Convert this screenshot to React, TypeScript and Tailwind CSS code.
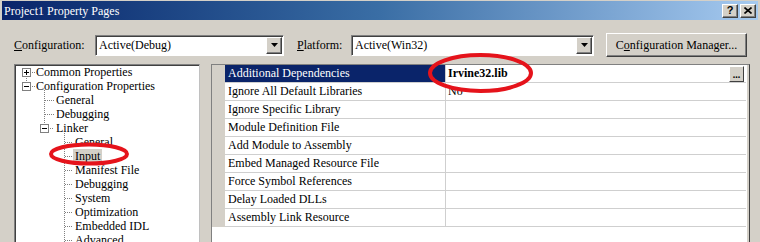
import React from "react";

const font = { fontFamily: '"Liberation Serif", "Times New Roman", serif' };

function Combo({ width, text }: { width: string; text: string }) {
  return (
    <div
      className={`${width} h-[21px] bg-white border border-t-[#808080] border-l-[#808080] border-b-white border-r-white shadow-[inset_1px_1px_0_#404040] flex items-center justify-between`}
    >
      <span className="pl-[3px] text-[12px] leading-none text-black">{text}</span>
      <div className="w-[16px] h-[17px] mr-[1px] bg-[#d4d0c8] border border-t-[#ffffff] border-l-[#ffffff] border-b-[#404040] border-r-[#404040] shadow-[inset_-1px_-1px_0_#808080] flex items-center justify-center">
        <svg width="7" height="4" viewBox="0 0 7 4">
          <path d="M0 0 H7 L3.5 4 Z" fill="#000" />
        </svg>
      </div>
    </div>
  );
}

const treeRows: { text: string; x: number; selected?: boolean }[] = [
  { text: "Common Properties", x: 36 },
  { text: "Configuration Properties", x: 36 },
  { text: "General", x: 56 },
  { text: "Debugging", x: 56 },
  { text: "Linker", x: 56 },
  { text: "General", x: 75 },
  { text: "Input", x: 75, selected: true },
  { text: "Manifest File", x: 75 },
  { text: "Debugging", x: 75 },
  { text: "System", x: 75 },
  { text: "Optimization", x: 75 },
  { text: "Embedded IDL", x: 75 },
  { text: "Advanced", x: 75 },
];

const gridRows: { name: string; value?: string; bold?: boolean; selected?: boolean }[] = [
  { name: "Additional Dependencies", value: "Irvine32.lib", bold: true, selected: true },
  { name: "Ignore All Default Libraries", value: "No" },
  { name: "Ignore Specific Library" },
  { name: "Module Definition File" },
  { name: "Add Module to Assembly" },
  { name: "Embed Managed Resource File" },
  { name: "Force Symbol References" },
  { name: "Delay Loaded DLLs" },
  { name: "Assembly Link Resource" },
];

function TreeLines() {
  const ox = 15;
  const cy = (i: number) => 7 + 14 * i;
  const dot = "#808080";
  const hLine = (x1: number, x2: number, y: number, k: string) => (
    <line key={k} x1={x1 - ox} x2={x2 - ox} y1={y + 0.5} y2={y + 0.5} stroke={dot} strokeDasharray="1 1" />
  );
  const vLine = (x: number, y1: number, y2: number, k: string) => (
    <line key={k} x1={x - ox + 0.5} x2={x - ox + 0.5} y1={y1} y2={y2} stroke={dot} strokeDasharray="1 1" />
  );
  const box = (x: number, y: number, plus: boolean, k: string) => (
    <g key={k}>
      <rect x={x - ox + 0.5} y={y - 4 + 0.5} width={8} height={8} fill="#fff" stroke="#808080" />
      <line x1={x - ox + 2} x2={x - ox + 7} y1={y + 0.5} y2={y + 0.5} stroke="#000" />
      {plus && <line x1={x - ox + 4.5} x2={x - ox + 4.5} y1={y - 2} y2={y + 3} stroke="#000" />}
    </g>
  );
  const els: React.ReactNode[] = [];
  els.push(vLine(26, cy(0), cy(1), "v1"));
  els.push(hLine(30, 35, cy(0), "h0"));
  els.push(hLine(30, 35, cy(1), "h1"));
  els.push(vLine(44, cy(1) + 4, cy(4), "v2"));
  els.push(hLine(45, 54, cy(2), "h2"));
  els.push(hLine(45, 54, cy(3), "h3"));
  els.push(hLine(48, 54, cy(4), "h4"));
  els.push(vLine(64, cy(4) + 5, 200, "v3"));
  for (let i = 5; i < 13; i++) els.push(hLine(65, 73, cy(i), "l3" + i));
  els.push(box(22, cy(0), true, "b0"));
  els.push(box(22, cy(1), false, "b1"));
  els.push(box(40, cy(4), false, "b4"));
  return (
    <svg className="absolute left-0 top-0 pointer-events-none" width="184" height="200">
      {els}
    </svg>
  );
}

export default function App() {
  return (
    <div className="relative w-[760px] h-[242px] overflow-hidden bg-[#d4d0c8] text-black" style={font}>
      {/* title bar */}
      <div className="pt-[1px] px-[2px]">
        <div className="h-[19px] bg-gradient-to-r from-[#0a246a] via-[#3a6ea5] to-[#a6caf0] flex items-center justify-between">
          <span className="pl-[2px] text-[12px] text-white leading-none">Project1 Property Pages</span>
          <div className="flex gap-[2px] pr-[2px]">
            <div
              className="w-[16px] h-[14px] bg-[#d4d0c8] border border-t-white border-l-white border-b-[#404040] border-r-[#404040] shadow-[inset_-1px_-1px_0_#808080] flex items-center justify-center text-[11px] font-bold leading-none"
              style={{ fontFamily: '"Liberation Sans", Arial, sans-serif' }}
            >
              ?
            </div>
            <div className="w-[16px] h-[14px] bg-[#d4d0c8] border border-t-white border-l-white border-b-[#404040] border-r-[#404040] shadow-[inset_-1px_-1px_0_#808080] flex items-center justify-center">
              <svg width="8" height="7" viewBox="0 0 8 7">
                <path d="M0.5 0.5 L7.5 6.5 M7.5 0.5 L0.5 6.5" stroke="#000" strokeWidth="1.6" />
              </svg>
            </div>
          </div>
        </div>
      </div>

      {/* config row */}
      <div className="mt-[13px] h-[24px] flex items-center pl-[14px] text-[12px]">
        <span className="w-[81px]">
          <span className="underline">C</span>onfiguration:
        </span>
        <Combo width="w-[189px]" text="Active(Debug)" />
        <span className="ml-[13px] w-[54px]">
          <span className="underline">P</span>latform:
        </span>
        <Combo width="w-[243px]" text="Active(Win32)" />
        <div className="ml-[12px] w-[141px] h-[24px] bg-[#d4d0c8] border border-t-white border-l-white border-b-[#404040] border-r-[#404040] shadow-[inset_-1px_-1px_0_#808080] flex items-center justify-center">
          C<span className="underline">o</span>nfiguration Manager...
        </div>
      </div>

      {/* panels */}
      <div className="mt-[7px] flex pl-[14px] text-[12px]">
        <div className="relative w-[186px] h-[200px] bg-white border border-t-[#808080] border-l-[#808080] border-b-white border-r-[#c0c0c0] shadow-[inset_1px_1px_0_#404040]">
          <TreeLines />
          <div className="flex flex-col">
            {treeRows.map((r, i) => (
              <div key={i} className="h-[14px] flex items-center" style={{ paddingLeft: r.x - 15 - 2 }}>
                <span className={`px-[2px] leading-[14px] ${r.selected ? "bg-[#d4d0c8]" : ""}`}>{r.text}</span>
              </div>
            ))}
          </div>
        </div>

        <div className="ml-[11px] w-[539px] h-[200px] bg-white border border-[#808080] border-r-[#404040] shadow-[inset_-2px_0_0_#d4d0c8]">
          {gridRows.map((r, i) => (
            <div key={i} className="flex h-[18px]">
              <div className="w-[13px] bg-[#d4d0c8]" />
              <div
                className={`w-[221px] border-b border-r border-[#cfcfcf] pl-[3px] pb-[2px] flex items-center ${
                  r.selected ? "bg-[#0a246a] text-white" : ""
                }`}
              >
                {r.name}
              </div>
              <div className="w-[300px] border-b border-[#cfcfcf] pl-[2px] flex items-center justify-between">
                <span className={`pb-[2px] ${r.bold ? "font-bold" : ""}`}>{r.value ?? ""}</span>
                {i === 0 && (
                  <div className="mr-[2px] w-[15px] h-[16px] bg-[#d4d0c8] border border-t-white border-l-white border-b-[#404040] border-r-[#404040] flex items-end justify-center text-[10px] leading-[10px] font-bold pb-[1px]">
                    ...
                  </div>
                )}
              </div>
            </div>
          ))}
        </div>
      </div>

      {/* red annotation ellipses */}
      <svg className="absolute left-0 top-0 pointer-events-none" width="760" height="242">
        <ellipse cx="480.5" cy="73" rx="50.5" ry="18" fill="none" stroke="#e5131b" strokeWidth="4" />
        <ellipse cx="89" cy="154" rx="38" ry="9.5" fill="none" stroke="#e5131b" strokeWidth="4" />
      </svg>
    </div>
  );
}
